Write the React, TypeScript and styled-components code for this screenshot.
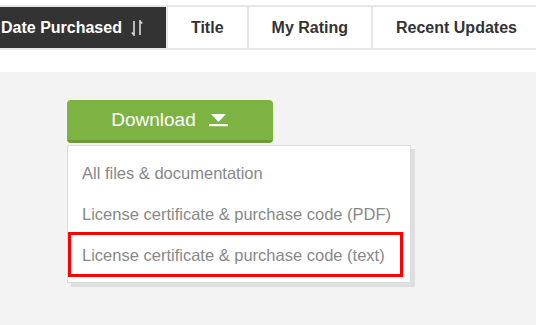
import React from "react";
import styled, {createGlobalStyle} from "styled-components";

const GlobalStyle = createGlobalStyle`
  html, body {
    margin: 0;
    padding: 0;
    background: #f3f3f3;
    font-family: "Liberation Sans", Arial, Helvetica, sans-serif;
  }
`;

const Page = styled.div`
  width: 536px;
  height: 325px;
  overflow: hidden;
  background: #f3f3f3;
`;

const Header = styled.header`
  background: #fff;
  padding: 5px 0 22px;
`;

const Tabs = styled.nav`
  display: flex;
  border-top: 2px solid #e6e6e6;
  border-bottom: 2px solid #e6e6e6;
  margin-left: -22px;
`;

const Tab = styled.div<{ $active?: boolean }>`
  display: flex;
  align-items: center;
  gap: 9px;
  flex-shrink: 0;
  height: 41px;
  padding: 0 23px;
  font-size: 16px;
  font-weight: bold;
  white-space: nowrap;
  color: ${p => (p.$active ? "#fff" : "#333")};
  background: ${p => (p.$active ? "#333" : "#fff")};
  border-right: 2px solid #e6e6e6;
`;

const Content = styled.main`
  padding: 28px 0 0 67px;
`;

const Button = styled.button`
  display: flex;
  align-items: center;
  justify-content: center;
  gap: 13px;
  width: 206px;
  height: 43px;
  padding: 0;
  border: none;
  border-bottom: 3px solid #6c9c37;
  border-radius: 4px;
  background: #7db343;
  color: #fff;
  font-family: inherit;
  font-size: 19px;
  cursor: pointer;
`;

const Menu = styled.ul`
  list-style: none;
  box-sizing: border-box;
  width: 344px;
  margin: 2px 0 0;
  padding: 7px 7px 6px 0;
  background: #fff;
  border: 1px solid #dcdcdc;
  box-shadow: 4px 4px 0 #dedede;
`;

const Item = styled.li<{ $highlighted?: boolean }>`
  position: relative;
  height: 41px;
  line-height: 41px;
  padding-left: 14px;
  font-size: 16.5px;
  color: #888;
  white-space: nowrap;

  &::after {
    content: "";
    display: ${p => (p.$highlighted ? "block" : "none")};
    position: absolute;
    top: -3px;
    bottom: -1px;
    left: 0;
    right: 0;
    border: 3px solid #f00;
  }
`;

function SortIcon() {
    return (
        <svg width="12" height="16" viewBox="0 0 12 16" fill="none" stroke="#d8d8d8" strokeWidth="1.6">
            <path d="M3 1 V15 L0.8 12.5"/>
            <path d="M9 15 V1 L11.2 3.5"/>
        </svg>
    );
}

function CaretIcon() {
    return (
        <svg width="20" height="14" viewBox="0 0 20 14" fill="#fff">
            <path d="M2 1 H17 L9.5 9 Z"/>
            <rect x="0" y="11" width="19" height="2.2"/>
        </svg>
    );
}

const tabs = ["Date Purchased", "Title", "My Rating", "Recent Updates"];
const downloads = [
    "All files & documentation",
    "License certificate & purchase code (PDF)",
    "License certificate & purchase code (text)",
];

function App() {
    return (
        <Page>
            <GlobalStyle/>
            <Header>
                <Tabs>
                    {tabs.map((t, i) => (
                        <Tab key={t} $active={i === 0}>
                            {t}
                            {i === 0 && <SortIcon/>}
                        </Tab>
                    ))}
                </Tabs>
            </Header>
            <Content>
                <Button>
                    Download
                    <CaretIcon/>
                </Button>
                <Menu>
                    {downloads.map((d, i) => (
                        <Item key={d} $highlighted={i === downloads.length - 1}>{d}</Item>
                    ))}
                </Menu>
            </Content>
        </Page>
    );
}

export default App;
